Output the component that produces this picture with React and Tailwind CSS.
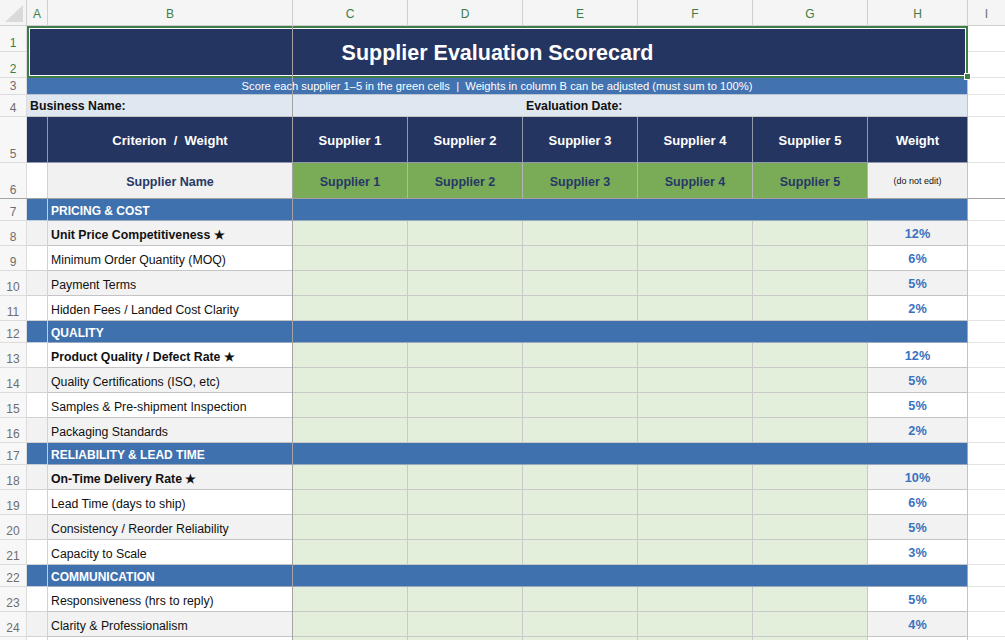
import React from "react";

const sections = [
  {
    title: "PRICING & COST",
    row: 7,
    items: [
      ["Unit Price Competitiveness ★", true, "12%"],
      ["Minimum Order Quantity (MOQ)", false, "6%"],
      ["Payment Terms", false, "5%"],
      ["Hidden Fees / Landed Cost Clarity", false, "2%"],
    ],
  },
  {
    title: "QUALITY",
    row: 12,
    items: [
      ["Product Quality / Defect Rate ★", true, "12%"],
      ["Quality Certifications (ISO, etc)", false, "5%"],
      ["Samples & Pre-shipment Inspection", false, "5%"],
      ["Packaging Standards", false, "2%"],
    ],
  },
  {
    title: "RELIABILITY & LEAD TIME",
    row: 17,
    items: [
      ["On-Time Delivery Rate ★", true, "10%"],
      ["Lead Time (days to ship)", false, "6%"],
      ["Consistency / Reorder Reliability", false, "5%"],
      ["Capacity to Scale", false, "3%"],
    ],
  },
  {
    title: "COMMUNICATION",
    row: 22,
    items: [
      ["Responsiveness (hrs to reply)", false, "5%"],
      ["Clarity & Professionalism", false, "4%"],
      ["", false, ""],
    ],
  },
];

function RowHdr({ n, green }) {
  return (
    <div
      className={`w-[27px] shrink-0 border-r border-b border-[#dcdcdc] bg-[#f7f7f7] flex items-end justify-center pb-[1px] text-[12px] leading-[14px] ${
        green ? "text-[#3d7d48]" : "text-[#6e6e6e]"
      }`}
    >
      {n}
    </div>
  );
}

function ICell() {
  return <div className="flex-1 border-b border-[#e3e3e3] bg-white" />;
}

function DataRow({ n, label, bold, weight }) {
  const bg = n % 2 === 0 ? "bg-[#f2f2f2]" : "bg-white";
  return (
    <div className="flex h-[25px] shrink-0">
      <RowHdr n={label ? n : ""} />
      <div className={`w-[21px] shrink-0 border-r border-b border-[#d2d2d2] ${bg}`} />
      <div
        className={`w-[245px] shrink-0 border-r border-b border-[#c4c4c4] ${bg} flex items-center pl-[3px] pt-[4px] text-[12.3px] text-[#111111] whitespace-nowrap ${
          bold ? "font-bold" : ""
        }`}
      >
        {label}
      </div>
      {[1, 2, 3, 4, 5].map((i) => (
        <div key={i} className="w-[115px] shrink-0 border-r border-b border-[#c9c9c9] bg-[#e3eedb]" />
      ))}
      <div
        className={`w-[100px] shrink-0 border-r border-b border-[#c4c4c4] ${bg} flex items-center justify-center pt-[4px] text-[12.7px] font-bold text-[#3a72bf]`}
      >
        {weight}
      </div>
      <ICell />
    </div>
  );
}

function SectionRow({ n, title }) {
  return (
    <div className="flex h-[22px] shrink-0">
      <RowHdr n={n} />
      <div className="w-[21px] shrink-0 border-r border-b border-[#c3cddb] bg-[#3f71ae]" />
      <div className="w-[245px] shrink-0 border-r border-b border-[#9aa8bd] bg-[#3f71ae] flex items-center pl-[3px] pt-[2px] text-[12px] font-bold text-white whitespace-nowrap">
        {title}
      </div>
      <div className="w-[675px] shrink-0 border-r border-b border-[#9aa8bd] bg-[#3f71ae]" />
      <ICell />
    </div>
  );
}

export default function App() {
  const colLetters = [
    ["A", "w-[21px]"],
    ["B", "w-[245px]"],
    ["C", "w-[115px]"],
    ["D", "w-[115px]"],
    ["E", "w-[115px]"],
    ["F", "w-[115px]"],
    ["G", "w-[115px]"],
    ["H", "w-[100px]"],
  ];
  const rows = [];
  sections.forEach((s) => {
    rows.push(<SectionRow key={"s" + s.row} n={s.row} title={s.title} />);
    s.items.forEach((it, i) => {
      const n = s.row + 1 + i;
      rows.push(<DataRow key={"d" + n} n={n} label={it[0]} bold={it[1]} weight={it[2]} />);
    });
  });

  return (
    <div className="relative w-[1005px] h-[640px] overflow-hidden bg-white font-['Liberation_Sans',Arial,sans-serif]">
      <div className="flex flex-col">
        {/* column headers */}
        <div className="flex h-[26px] shrink-0">
          <div className="w-[27px] shrink-0 border-r border-b border-[#d0d0d0] bg-[#f5f5f5] flex items-end justify-end p-[3px]">
            <svg width="18" height="17" viewBox="0 0 18 17">
              <polygon points="18,0 18,17 0,17" fill="#dadada" />
            </svg>
          </div>
          {colLetters.map(([l, w]) => (
            <div
              key={l}
              className={`${w} shrink-0 border-r border-b border-[#d0d0d0] bg-[#f5f5f5] flex items-center justify-center pt-[3px] text-[12px] text-[#3d7d48]`}
            >
              {l}
            </div>
          ))}
          <div className="flex-1 border-b border-[#d0d0d0] bg-[#f5f5f5] flex items-center justify-center pt-[3px] text-[12px] text-[#6e6e6e]">
            I
          </div>
        </div>

        {/* rows 1-2 title */}
        <div className="flex h-[52px] shrink-0">
          <div className="flex flex-col">
            <div className="h-[26px] flex">
              <RowHdr n={1} green />
            </div>
            <div className="h-[26px] flex">
              <RowHdr n={2} green />
            </div>
          </div>
          <div className="w-[941px] shrink-0 border-2 border-[#3f7d46] bg-[#253561] shadow-[inset_0_0_0_1px_#ffffff] flex items-center justify-center pt-[2px] text-[21.5px] font-bold text-white">
            Supplier Evaluation Scorecard
          </div>
          <div className="flex-1 flex flex-col">
            <div className="h-[26px] border-b border-[#e3e3e3]" />
            <div className="h-[26px] border-b border-[#e3e3e3]" />
          </div>
        </div>

        {/* row 3 */}
        <div className="flex h-[17px] shrink-0">
          <RowHdr n={3} />
          <div className="w-[941px] shrink-0 border-r border-b border-[#b9c3d2] bg-[#4272b0] flex items-center justify-center text-[11.2px] text-white whitespace-pre">
            {"Score each supplier 1–5 in the green cells  |  Weights in column B can be adjusted (must sum to 100%)"}
          </div>
          <ICell />
        </div>

        {/* row 4 */}
        <div className="flex h-[22px] shrink-0">
          <RowHdr n={4} />
          <div className="w-[496px] shrink-0 border-b border-[#c4c4c4] bg-[#dfe7f0] flex items-center pl-[3px] pt-[2px] text-[12.3px] font-bold text-[#111111]">
            Business Name:
          </div>
          <div className="w-[445px] shrink-0 border-r border-b border-[#c4c4c4] bg-[#dfe7f0] flex items-center pl-[3px] pt-[2px] text-[12.3px] font-bold text-[#111111]">
            Evaluation Date:
          </div>
          <ICell />
        </div>

        {/* row 5 */}
        <div className="flex h-[46px] shrink-0">
          <RowHdr n={5} />
          <div className="w-[21px] shrink-0 border-r border-b border-[#9299a8] bg-[#253561]" />
          <div className="w-[245px] shrink-0 border-r border-b border-[#9299a8] bg-[#253561] flex items-center justify-center pt-[2px] text-[13px] font-bold text-white whitespace-pre">
            {"Criterion  /  Weight"}
          </div>
          {[1, 2, 3, 4, 5].map((i) => (
            <div
              key={i}
              className="w-[115px] shrink-0 border-r border-b border-[#9299a8] bg-[#253561] flex items-center justify-center pt-[2px] text-[13px] font-bold text-white"
            >
              Supplier {i}
            </div>
          ))}
          <div className="w-[100px] shrink-0 border-r border-b border-[#9299a8] bg-[#253561] flex items-center justify-center pt-[2px] text-[13px] font-bold text-white">
            Weight
          </div>
          <ICell />
        </div>

        {/* row 6 */}
        <div className="flex h-[36px] shrink-0">
          <RowHdr n={6} />
          <div className="w-[21px] shrink-0 border-r border-b border-[#d2d2d2] bg-white" />
          <div className="w-[245px] shrink-0 border-r border-b border-[#c4c4c4] bg-[#f1f1f1] flex items-center justify-center pt-[3px] text-[12.5px] font-bold text-[#263866]">
            Supplier Name
          </div>
          {[1, 2, 3, 4, 5].map((i) => (
            <div
              key={i}
              className="w-[115px] shrink-0 border-r border-b border-[#b4b4b4] bg-[#7aab56] flex items-center justify-center pt-[3px] text-[12.5px] font-bold text-[#263866]"
            >
              Supplier {i}
            </div>
          ))}
          <div className="w-[100px] shrink-0 border-r border-b border-[#c4c4c4] bg-[#f1f1f1] flex items-center justify-center pt-[3px] text-[9px] text-[#111111]">
            (do not edit)
          </div>
          <ICell />
        </div>

        {rows}
      </div>

      {/* freeze pane lines */}
      <div className="absolute left-[292px] top-[26px] bottom-0 w-px bg-[#a3a3a3]" />
      <div className="absolute left-0 right-0 top-[198px] h-px bg-[#a3a3a3]" />
      {/* selection handle */}
      <div className="absolute left-[964px] top-[73px] w-[7px] h-[7px] bg-[#3f7d46] border border-white" />
    </div>
  );
}
